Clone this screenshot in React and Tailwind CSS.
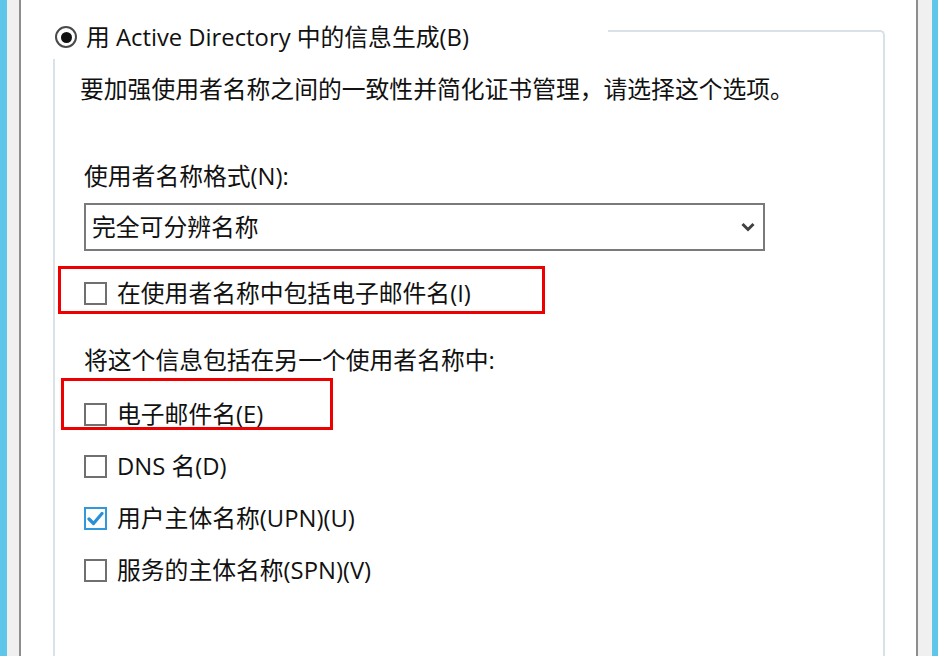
import React from "react";

const font = { fontFamily: '"Open Sans", "Noto Sans CJK SC", sans-serif' };

function Box({ checked }) {
  if (checked) {
    return (
      <div className="w-[23px] h-[23px] border-2 border-[#3199da] bg-white flex items-center justify-center shrink-0">
        <svg width="17" height="15" viewBox="0 0 17 15">
          <path d="M2 8 L6.5 12.5 L15 2.5" fill="none" stroke="#2a8fd6" strokeWidth="3.2" strokeLinecap="round" strokeLinejoin="round" />
        </svg>
      </div>
    );
  }
  return <div className="w-[23px] h-[23px] border-2 border-[#707070] bg-white shrink-0" />;
}

function Row({ checked, children, className = "" }) {
  return (
    <div className={"flex items-center gap-[10px] h-[30px] " + className}>
      <Box checked={checked} />
      <span className="leading-[30px]">{children}</span>
    </div>
  );
}

export default function App() {
  return (
    <div className="w-[938px] h-[656px] overflow-hidden flex bg-white text-[#111] text-[23.8px]" style={font}>
      <div className="w-[7px] bg-[#5fc6ea]" />
      <div className="w-[12px] bg-[#f0f0f0]" />
      <div className="w-[2px] bg-[#8d8d8d]" />
      <div className="flex-1 bg-white pt-[30px] pl-[32px] pr-[31px]">
        <div className="relative h-[700px] border-t-2 border-l-2 border-r-2 border-[#d9e2e8] rounded-tr-[5px] pl-[29px]">
          {/* header radio overlaying the group border */}
          <div className="absolute left-[-10px] top-[-17px] w-[563px] h-[44px] bg-white flex items-center pl-[10px] gap-[9px]">
            <div className="w-[22px] h-[22px] rounded-full border-[2.5px] border-[#4a4a4a] flex items-center justify-center bg-white">
              <div className="w-[11px] h-[11px] rounded-full bg-[#111]" />
            </div>
            <span className="leading-[30px]">用 Active Directory 中的信息生成(B)</span>
          </div>

          <div className="pt-[42px] -ml-[4px] leading-[30px] h-[30px] box-content whitespace-nowrap">
            要加强使用者名称之间的一致性并简化证书管理，请选择这个选项。
          </div>
          <div className="mt-[57px] leading-[30px] h-[30px]">使用者名称格式(N):</div>
          <div className="mt-[12px] w-[681px] h-[48px] border-2 border-[#7a7a7a] flex items-center justify-between pl-[6px] pr-[8px]">
            <span className="leading-[30px]">完全可分辨名称</span>
            <svg width="14" height="10" viewBox="0 0 14 10">
              <path d="M1.5 2 L7 7.5 L12.5 2" fill="none" stroke="#404040" strokeWidth="3" />
            </svg>
          </div>
          <Row className="mt-[27px]">在使用者名称中包括电子邮件名(I)</Row>
          <div className="mt-[37px] leading-[30px] h-[30px]">将这个信息包括在另一个使用者名称中:</div>
          <div className="mt-[24px] flex flex-col gap-[22px]">
            <Row>电子邮件名(E)</Row>
            <Row>DNS 名(D)</Row>
            <Row checked>用户主体名称(UPN)(U)</Row>
            <Row>服务的主体名称(SPN)(V)</Row>
          </div>

          {/* red annotation boxes */}
          <div className="absolute left-[3px] top-[234px] w-[487px] h-[48px] border-[3px] border-[#ee0000]" />
          <div className="absolute left-[6px] top-[346px] w-[272px] h-[52px] border-[3px] border-[#ee0000]" />
        </div>
      </div>
      <div className="w-[2px] bg-[#8d8d8d]" />
      <div className="w-[14px] bg-[#f0f0f0]" />
      <div className="w-[6px] bg-[#5fc6ea]" />
    </div>
  );
}
